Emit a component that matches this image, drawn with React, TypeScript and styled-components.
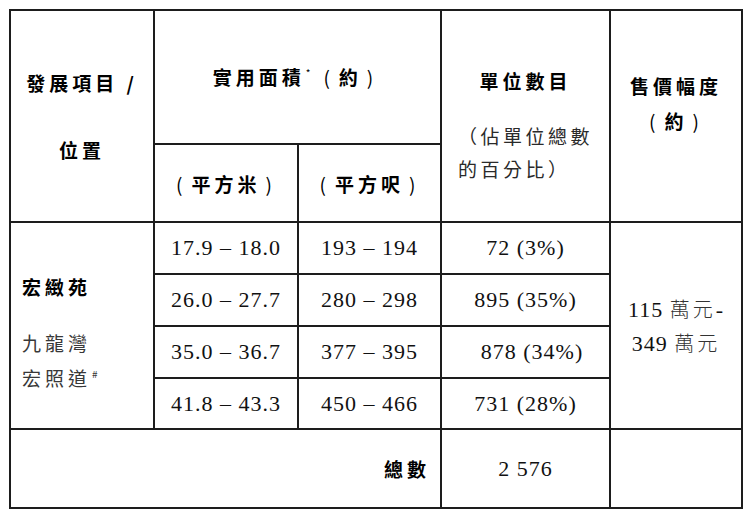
import styled, { createGlobalStyle } from 'styled-components';

const GlobalStyle = createGlobalStyle`
  html, body {
    margin: 0;
    padding: 0;
    background: #fff;
  }
  body {
    font-family: "Noto Sans CJK TC", "Noto Sans", sans-serif;
    color: #111;
  }
`;

const cjk = `"Noto Sans CJK TC", "Noto Sans CJK SC", sans-serif`;
const serif = `"Liberation Serif", "Noto Sans CJK TC", serif`;

const sizeRows = [
  { sqm: '17.9 – 18.0', sqft: '193 – 194', units: '72 (3%)' },
  { sqm: '26.0 – 27.7', sqft: '280 – 298', units: '895 (35%)' },
  { sqm: '35.0 – 36.7', sqft: '377 – 395', units: '\u00a0\u00a0878 (34%)' },
  { sqm: '41.8 – 43.3', sqft: '450 – 466', units: '731 (28%)' },
];

export default function App() {
  return (
    <>
      <GlobalStyle />
      <Page>
        <Table>
          <colgroup>
            <col style={{ width: '144px' }} />
            <col style={{ width: '144px' }} />
            <col style={{ width: '143px' }} />
            <col style={{ width: '169px' }} />
            <col style={{ width: '132px' }} />
          </colgroup>
          <thead>
            <Row $h={134}>
              <Head rowSpan={2}>
                <HeadLines $lh={67}>
                  發展項目 /<br />位置
                </HeadLines>
              </Head>
              <Head colSpan={2}>
                實用面積<Mark $after={8}>*</Mark>
                <Paren>(</Paren>約<Paren>)</Paren>
              </Head>
              <Head rowSpan={2} $padTop={18}>
                <HeadLines $lh={30}>單位數目</HeadLines>
                <SubNote>
                  （佔單位總數<br />的百分比）
                </SubNote>
              </Head>
              <Head rowSpan={2} $padBottom={26}>
                <HeadLines $lh={35}>
                  售價幅度<br />
                  <Paren>(</Paren>約<Paren>)</Paren>
                </HeadLines>
              </Head>
            </Row>
            <Row $h={78}>
              <Head $padTop={2}>
                <Paren>(</Paren>平方米<Paren>)</Paren>
              </Head>
              <Head $padTop={2}>
                <Paren>(</Paren>平方呎<Paren>)</Paren>
              </Head>
            </Row>
          </thead>
          <tbody>
            {sizeRows.map((r, i) => (
              <Row key={r.sqm} $h={i === 3 ? 51 : 52}>
                {i === 0 && (
                  <Cell rowSpan={4} $align="left" $padTop={12}>
                    <Project>
                      <ProjectName>宏緻苑</ProjectName>
                      <Place>
                        九龍灣<br />宏照道<Mark>#</Mark>
                      </Place>
                    </Project>
                  </Cell>
                )}
                <Num>{r.sqm}</Num>
                <Num>{r.sqft}</Num>
                <Num>{r.units}</Num>
                {i === 0 && (
                  <Cell rowSpan={4}>
                    <Price>
                      115 <Wan>萬元</Wan>-<br />349 <Wan>萬元</Wan>
                    </Price>
                  </Cell>
                )}
              </Row>
            ))}
            <Row $h={79}>
              <Head colSpan={3} $align="right" $padRight={10}>
                總數
              </Head>
              <Num>2 576</Num>
              <Cell />
            </Row>
          </tbody>
        </Table>
      </Page>
    </>
  );
}

const Page = styled.div`
  padding: 9px 0 0 9px;
`;

const Table = styled.table`
  border-collapse: collapse;
  table-layout: fixed;
  width: 732px;
`;

const Row = styled.tr<{ $h: number }>`
  height: ${(p) => p.$h}px;
`;

type CellProps = {
  $align?: 'left' | 'center' | 'right';
  $padTop?: number;
  $padBottom?: number;
  $padRight?: number;
};

const Cell = styled.td<CellProps>`
  border: 2px solid #1d1d1d;
  padding: ${(p) => p.$padTop ?? 0}px ${(p) => p.$padRight ?? 0}px
    ${(p) => p.$padBottom ?? 0}px ${(p) => (p.$align === 'left' ? 11 : 0)}px;
  text-align: ${(p) => p.$align ?? 'center'};
  vertical-align: middle;
  font-family: ${cjk};
  font-size: 19px;
  color: #222;
`;

const Head = styled(Cell).attrs({ as: 'th' })`
  font-weight: 700;
  color: #000;
  letter-spacing: 4px;
  line-height: 30px;
`;

const HeadLines = styled.div<{ $lh: number }>`
  line-height: ${(p) => p.$lh}px;
`;

const Paren = styled.span`
  display: inline-block;
  margin: 0 5px;
  font-weight: 400;
`;

const SubNote = styled.div`
  display: inline-block;
  margin-top: 23px;
  text-align: left;
  font-weight: 400;
  color: #2a2a2a;
  letter-spacing: 3.5px;
  line-height: 33px;
`;

const Mark = styled.sup<{ $after?: number }>`
  font-size: 10px;
  font-weight: 400;
  letter-spacing: 0;
  vertical-align: 8px;
  line-height: 0;
  margin: 0 ${(p) => p.$after ?? 1}px 0 1px;
`;

const Num = styled(Cell)`
  font-family: ${serif};
  font-size: 22px;
  letter-spacing: 1px;
  color: #111;
`;

const Project = styled.div`
  letter-spacing: 4px;
`;

const ProjectName = styled.div`
  font-weight: 700;
  color: #000;
  line-height: 35px;
  margin-bottom: 21px;
`;

const Place = styled.div`
  font-weight: 400;
  color: #383838;
  line-height: 35px;
`;

const Price = styled.div`
  font-family: ${serif};
  font-size: 22px;
  letter-spacing: 1px;
  line-height: 33px;
  color: #111;
`;

const Wan = styled.span`
  font-family: ${cjk};
  font-size: 20px;
  font-weight: 300;
  letter-spacing: 3px;
  color: #333;
`;
